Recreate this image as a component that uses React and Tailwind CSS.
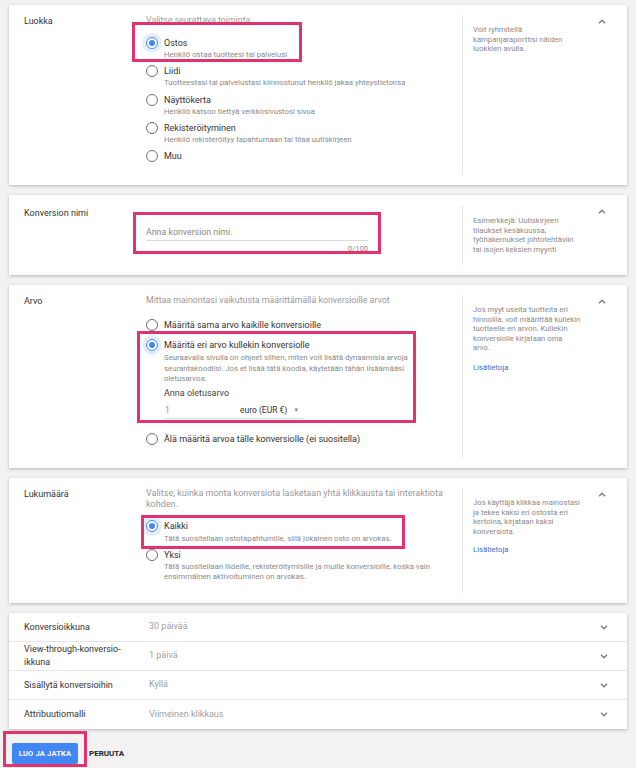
import React from 'react';

const PINK = 'border-[3px] border-[#e2336f]';

function Chevron({ up }) {
  return (
    <svg width="8" height="5" viewBox="0 0 8 5" className="text-[#7a7a7a]">
      <path d={up ? 'M1 4.2 L4 1.2 L7 4.2' : 'M1 0.8 L4 3.8 L7 0.8'} fill="none" stroke="currentColor" strokeWidth="1.3" />
    </svg>
  );
}

function Radio({ checked }) {
  return (
    <span className="relative flex w-[12px] h-[12px] shrink-0 items-center justify-center">
      {checked && <span className="absolute -inset-[4px] rounded-full bg-[#e3edfc]" />}
      <span
        className={
          'relative w-[12px] h-[12px] rounded-full border-[1.5px] flex items-center justify-center bg-white ' +
          (checked ? 'border-[#4285f4]' : 'border-[#6e6e6e]')
        }
      >
        {checked && <span className="w-[6px] h-[6px] rounded-full bg-[#4285f4]" />}
      </span>
    </span>
  );
}

function Option({ checked, title, desc, descClass = 'leading-[12px]' }) {
  return (
    <div className="flex gap-[6px]">
      <Radio checked={checked} />
      <div>
        <div className="text-[9px] leading-[12px] text-[#333]">{title}</div>
        {desc && <div className={'text-[7.8px] text-[#8a8a8a] ' + descClass}>{desc}</div>}
      </div>
    </div>
  );
}

function Card({ label, height, children, side, pink }) {
  return (
    <div className={'relative mx-[9px] bg-white shadow-[0_1px_3px_rgba(0,0,0,0.25)] flex ' + height}>
      <div className="w-[137px] shrink-0 pl-[15px] pt-[10px] text-[9px] leading-[12px] text-[#333]">{label}</div>
      <div className="w-[316px] shrink-0">{children}</div>
      <div className="my-[10px] border-l border-[#ebebeb] pl-[10px] pt-[10px] w-[130px] text-[7.7px] leading-[9.5px] text-[#8a8a8a]">
        {side}
      </div>
      <div className="pt-[14px] pl-[6px]">
        <Chevron up />
      </div>
      {pink && <div className={'absolute ' + PINK + ' ' + pink} />}
    </div>
  );
}

function Row({ label, value, last }) {
  return (
    <div className={'flex items-center h-[29px] ' + (last ? '' : 'border-b border-[#e6e6e6]')}>
      <div className="w-[140px] shrink-0 pl-[15px] text-[9px] leading-[13px] text-[#333]">{label}</div>
      <div className="flex-1 text-[9px] text-[#a0a0a0]">{value}</div>
      <div className="pr-[19px]">
        <Chevron />
      </div>
    </div>
  );
}

export default function App() {
  return (
    <div className="relative w-[636px] h-[768px] bg-[#f2f2f2] pt-[5px] overflow-hidden" style={{ fontFamily: 'Roboto, "Liberation Sans", sans-serif' }}>
      {/* Luokka */}
      <Card
        label="Luokka"
        height="h-[180px]"
        pink="left-[123px] top-[17px] w-[170px] h-[40px]"
        side={<div>Voit ryhmitellä<br />kampanjaraporttisi näiden<br />luokkien avulla.</div>}
      >
        <div className="pt-[9px] text-[8.8px] leading-[12px] text-[#999]">Valitse seurattava toiminta</div>
        <div className="mt-[11px] flex flex-col gap-[4.3px]">
          <Option checked title="Ostos" desc="Henkilö ostaa tuotteesi tai palvelusi" />
          <Option title="Liidi" desc="Tuotteestasi tai palvelustasi kiinnostunut henkilö jakaa yhteystietonsa" />
          <Option title="Näyttökerta" desc="Henkilö katsoo tiettyä verkkosivustosi sivua" />
          <Option title="Rekisteröityminen" desc="Henkilö rekisteröityy tapahtumaan tai tilaa uutiskirjeen" />
          <Option title="Muu" />
        </div>
      </Card>

      <div className="h-[10px]" />

      {/* Konversion nimi */}
      <Card
        label={<div className="pt-[2px]">Konversion nimi</div>}
        height="h-[80px]"
        pink="left-[124px] top-[17px] w-[248px] h-[42px]"
        side={<div className="pt-[1px]">Esimerkkejä: Uutiskirjeen<br />tilaukset kesäkuussa,<br />työhakemukset johtotehtäviin<br />tai isojen keksien myynti</div>}
      >
        <div className="pt-[31px] w-[222px]">
          <div className="text-[8.8px] leading-[12px] text-[#888] pb-[2px] border-b border-[#dcdcdc]">Anna konversion nimi.</div>
          <div className="text-right text-[7.5px] leading-[10px] mt-[3px] text-[#888]">0/100</div>
        </div>
      </Card>

      <div className="h-[10px]" />

      {/* Arvo */}
      <Card
        label="Arvo"
        height="h-[183px]"
        pink="left-[128px] top-[46px] w-[279px] h-[92px]"
        side={
          <div>
            Jos myyt useita tuotteita eri<br />hinnoilla, voit määrittää kullekin<br />tuotteelle eri arvon. Kullekin<br />konversiolle kirjataan oma<br />arvo.
            <div className="mt-[10px] text-[#3b6fc9]">Lisätietoja</div>
          </div>
        }
      >
        <div className="pt-[9px] text-[8.8px] leading-[12px] text-[#999]">Mittaa mainontasi vaikutusta määrittämällä konversioille arvot</div>
        <div className="mt-[13px] flex flex-col gap-[8px]">
          <Option title="Määritä sama arvo kaikille konversioille" />
          <div>
            <Option
              checked
              title="Määritä eri arvo kullekin konversiolle"
              descClass="leading-[10.5px] pt-[2px] w-[262px]"
              desc="Seuraavalla sivulla on ohjeet siihen, miten voit lisätä dynaamisia arvoja seurantakoodiisi. Jos et lisää tätä koodia, käytetään tähän lisäämääsi oletusarvoa."
            />
            <div className="ml-[18px] mt-[2px] text-[9px] leading-[12px] text-[#444]">Anna oletusarvo</div>
            <div className="ml-[19px] mt-[5px] w-[138px] flex items-center border-b border-[#dcdcdc] pb-[2px]">
              <span className="w-[75px] text-[8.5px] leading-[12px] text-[#999]">1</span>
              <span className="text-[8.5px] leading-[12px] text-[#333]">euro (EUR €)</span>
              <span className="ml-[6px] text-[6px] text-[#888]">▼</span>
            </div>
          </div>
          <div className="mt-[6px]">
            <Option title="Älä määritä arvoa tälle konversiolle (ei suositella)" />
          </div>
        </div>
      </Card>

      <div className="h-[10px]" />

      {/* Lukumäärä */}
      <Card
        label="Lukumäärä"
        height="h-[125px]"
        pink="left-[132px] top-[37px] w-[264px] h-[34px]"
        side={
          <div>
            Jos käyttäjä klikkaa mainostasi<br />ja tekee kaksi eri ostosta eri<br />kertoina, kirjataan kaksi<br />konversiota.
            <div className="mt-[9px] text-[#3b6fc9]">Lisätietoja</div>
          </div>
        }
      >
        <div className="pt-[9.5px] text-[9px] leading-[11px] text-[#999] w-[305px]">
          Valitse, kuinka monta konversiota lasketaan yhtä klikkausta tai interaktiota kohden.
        </div>
        <div className="mt-[10.5px] flex flex-col gap-[4px]">
          <Option checked title="Kaikki" descClass="leading-[12px] pt-[1px]" desc="Tätä suositellaan ostotapahtumille, sillä jokainen osto on arvokas." />
          <Option
            title="Yksi"
            descClass="leading-[10px] pt-[1px] w-[275px]"
            desc="Tätä suositellaan liideille, rekisteröitymisille ja muille konversioille, koska vain ensimmäinen aktivoituminen on arvokas."
          />
        </div>
      </Card>

      <div className="h-[10px]" />

      {/* Collapsed settings */}
      <div className="mx-[9px] bg-white shadow-[0_1px_3px_rgba(0,0,0,0.25)]">
        <Row label="Konversioikkuna" value="30 päivää" />
        <Row label={<span>View-through-konversio-<br />ikkuna</span>} value="1 päivä" />
        <Row label="Sisällytä konversioihin" value="Kyllä" />
        <Row label="Attribuutiomalli" value="Viimeinen klikkaus" last />
      </div>

      {/* Actions */}
      <div className="relative mt-[14px] ml-[12px] flex items-center gap-[11px]">
        <button className="h-[21px] w-[66px] bg-[#4285f4] text-white text-[7.5px] font-bold rounded-[2px] tracking-[0.2px]">
          LUO JA JATKA
        </button>
        <span className="text-[8px] font-bold text-[#222]">PERUUTA</span>
        <div className={'absolute -left-[9px] -top-[12px] w-[84px] h-[36px] ' + PINK} />
      </div>
    </div>
  );
}
